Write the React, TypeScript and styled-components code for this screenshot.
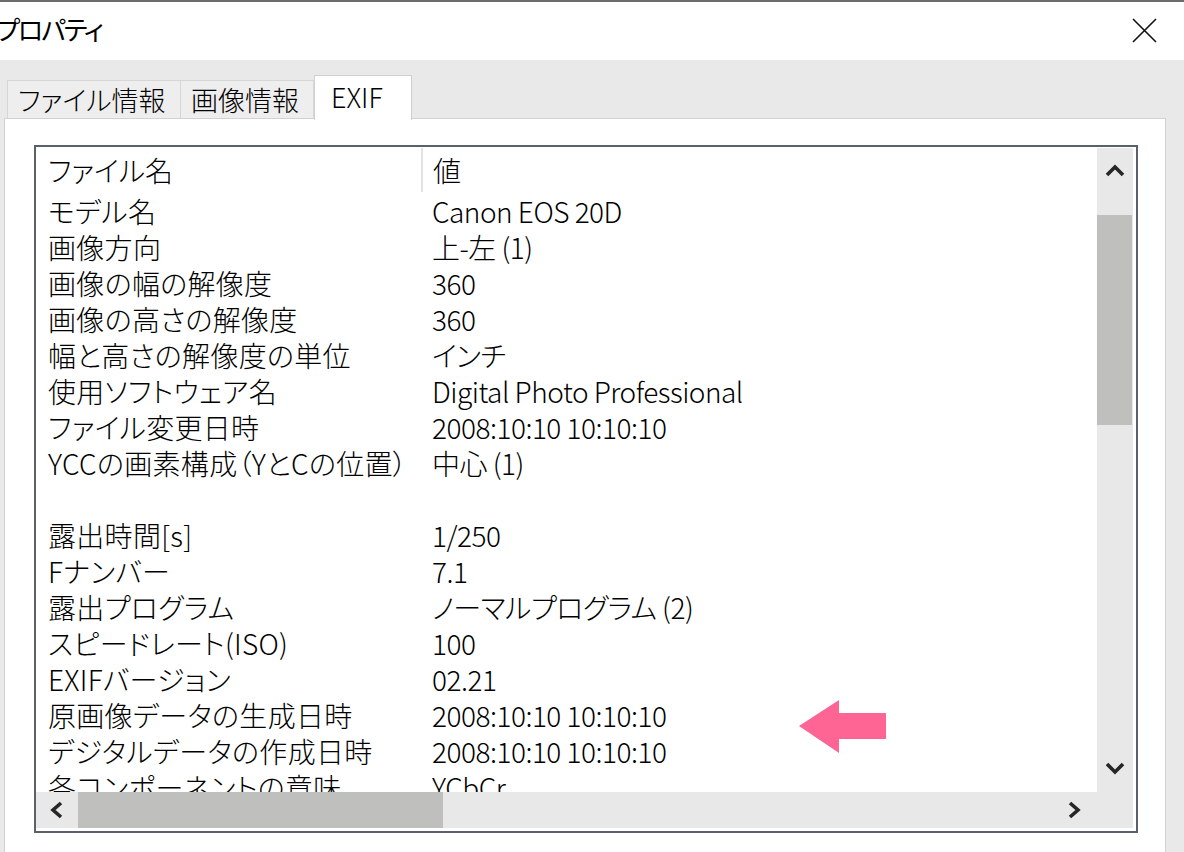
import React, { FC } from 'react';
import styled, { createGlobalStyle } from 'styled-components';

const GlobalStyle = createGlobalStyle`
  html, body {
    margin: 0;
    padding: 0;
    overflow: hidden;
    background: #ffffff;
  }
  * {
    box-sizing: border-box;
  }
`;

const Window = styled.div`
  width: 1184px;
  height: 852px;
  display: flex;
  flex-direction: column;
  background: #e9e9e9;
  border-top: 2px solid #6c6c6c;
  overflow: hidden;
  font-family: 'Noto Sans CJK JP', 'Noto Sans', sans-serif;
  font-weight: 300;
  color: #000;
`;

const TitleBar = styled.div`
  height: 58px;
  flex: none;
  display: flex;
  align-items: center;
  justify-content: space-between;
  background: #ffffff;
  padding-right: 27px;
`;

const Title = styled.span`
  font-size: 26px;
  font-weight: 400;
  letter-spacing: -2px;
  margin-left: -4px;
  margin-top: -6px;
  font-feature-settings: 'palt';
`;

const CloseButton = styled.svg`
  width: 25px;
  height: 25px;
  margin-top: -2px;
`;

const Body = styled.div`
  flex: 1;
  display: flex;
  flex-direction: column;
  padding: 15px 0 0 4px;
  min-height: 0;
`;

const TabStrip = styled.div`
  height: 43px;
  flex: none;
  display: flex;
  align-items: flex-end;
  padding-left: 3px;
`;

const Tab = styled.div<{ $w: number; $active?: boolean }>`
  width: ${(p) => p.$w}px;
  height: ${(p) => (p.$active ? 45 : 38)}px;
  margin-bottom: ${(p) => (p.$active ? -2 : 0)}px;
  position: relative;
  z-index: ${(p) => (p.$active ? 1 : 0)};
  background: ${(p) => (p.$active ? '#ffffff' : '#eeeeee')};
  border: 1px solid ${(p) => (p.$active ? '#d0d0d0' : '#d6d6d6')};
  border-bottom: none;
  margin-left: ${(p) => (p.$active ? 0 : -1)}px;
  display: flex;
  align-items: ${(p) => (p.$active ? 'flex-start' : 'center')};
  padding: ${(p) => (p.$active ? '5px 0 0 16px' : '0 0 0 10px')};
  font-size: 27px;
  line-height: 32px;
  font-feature-settings: 'palt';
  white-space: nowrap;
  &:first-child {
    margin-left: 0;
  }
`;

const Panel = styled.div`
  flex: 1;
  width: 1162px;
  background: #ffffff;
  border: 1px solid #d2d2d2;
  border-bottom: none;
  padding: 26px 0 0 29px;
`;

const ListView = styled.div`
  width: 1104px;
  height: 688px;
  border: 2px solid #59616a;
  padding: 1px 3px 3px 0;
  display: grid;
  grid-template-columns: 1fr 36px;
  grid-template-rows: 1fr 36px;
  background: #ffffff;
`;

const ListArea = styled.div`
  position: relative;
  overflow: hidden;
  font-size: 28px;
  font-feature-settings: 'palt';
`;

const HeaderRow = styled.div`
  height: 45px;
  display: grid;
  grid-template-columns: 385px 1fr;
`;

const HeaderCell = styled.div<{ $sep?: boolean }>`
  height: 44px;
  line-height: 44px;
  padding-left: ${(p) => (p.$sep ? 10 : 12)}px;
  border-left: ${(p) => (p.$sep ? '2px solid #e2e2e2' : 'none')};
  white-space: nowrap;
`;

const Row = styled.div`
  height: 36px;
  line-height: 36px;
  display: grid;
  grid-template-columns: 385px 1fr;
  white-space: nowrap;
`;

const NameCell = styled.div`
  padding-left: 12px;
  letter-spacing: 0.3px;
`;

const ValueCell = styled.div`
  padding-left: 11px;
  letter-spacing: -0.5px;
`;

const Pointer = styled.svg`
  position: absolute;
  left: 763px;
  top: 552px;
  width: 87px;
  height: 54px;
`;

const VScroll = styled.div`
  background: #e8e8e8;
  display: flex;
  flex-direction: column;
`;

const HScroll = styled.div`
  background: #e8e8e8;
  display: flex;
`;

const Corner = styled.div`
  background: #e8e8e8;
`;

const ArrowButton = styled.div<{ $size: number }>`
  flex: none;
  flex-basis: ${(p) => p.$size}px;
  display: flex;
  align-items: center;
  justify-content: center;
`;

const VThumb = styled.div`
  height: 210px;
  margin: 23px 1px 0 0;
  background: #bfc0be;
`;

const HThumb = styled.div`
  width: 365px;
  background: #bfc0be;
`;

const Spacer = styled.div`
  flex: 1;
`;

const Chevron: FC<{ dir: 'up' | 'down' | 'left' | 'right' }> = ({ dir }) => {
  const vertical = dir === 'up' || dir === 'down';
  const points = {
    up: '2,12 10,4 18,12',
    down: '2,3 10,11 18,3',
    left: '11,2 3,9 11,16',
    right: '3,2 11,9 3,16',
  }[dir];
  return (
    <svg
      width={vertical ? 20 : 14}
      height={vertical ? 15 : 18}
      viewBox={vertical ? '0 0 20 15' : '0 0 14 18'}
    >
      <polyline points={points} fill="none" stroke="#262626" strokeWidth="3.6" />
    </svg>
  );
};

const rows: [string, string][] = [
  ['モデル名', 'Canon EOS 20D'],
  ['画像方向', '上-左 (1)'],
  ['画像の幅の解像度', '360'],
  ['画像の高さの解像度', '360'],
  ['幅と高さの解像度の単位', 'インチ'],
  ['使用ソフトウェア名', 'Digital Photo Professional'],
  ['ファイル変更日時', '2008:10:10 10:10:10'],
  ['YCCの画素構成（YとCの位置）', '中心 (1)'],
  ['', ''],
  ['露出時間[s]', '1/250'],
  ['Fナンバー', '7.1'],
  ['露出プログラム', 'ノーマルプログラム (2)'],
  ['スピードレート(ISO)', '100'],
  ['EXIFバージョン', '02.21'],
  ['原画像データの生成日時', '2008:10:10 10:10:10'],
  ['デジタルデータの作成日時', '2008:10:10 10:10:10'],
  ['各コンポーネントの意味', 'YCbCr'],
];

const App: FC = () => (
  <>
    <GlobalStyle />
    <Window>
      <TitleBar>
        <Title>プロパティ</Title>
        <CloseButton viewBox="0 0 25 25">
          <path d="M1 1 L24 24 M24 1 L1 24" stroke="#111" strokeWidth="1.6" fill="none" />
        </CloseButton>
      </TitleBar>
      <Body>
        <TabStrip>
          <Tab $w={174}>ファイル情報</Tab>
          <Tab $w={134}>画像情報</Tab>
          <Tab $w={98} $active>
            EXIF
          </Tab>
        </TabStrip>
        <Panel>
          <ListView>
            <ListArea>
              <HeaderRow>
                <HeaderCell>ファイル名</HeaderCell>
                <HeaderCell $sep>値</HeaderCell>
              </HeaderRow>
              {rows.map(([name, value], i) => (
                <Row key={i}>
                  <NameCell>{name}</NameCell>
                  <ValueCell>{value}</ValueCell>
                </Row>
              ))}
              <Pointer viewBox="0 0 87 54">
                <path d="M0 26 L40 0 L40 13 L87 13 L87 39 L40 39 L40 53 Z" fill="#fe6494" />
              </Pointer>
            </ListArea>
            <VScroll>
              <ArrowButton $size={44}>
                <Chevron dir="up" />
              </ArrowButton>
              <VThumb />
              <Spacer />
              <ArrowButton $size={48}>
                <Chevron dir="down" />
              </ArrowButton>
            </VScroll>
            <HScroll>
              <ArrowButton $size={42}>
                <Chevron dir="left" />
              </ArrowButton>
              <HThumb />
              <Spacer />
              <ArrowButton $size={46}>
                <Chevron dir="right" />
              </ArrowButton>
            </HScroll>
            <Corner />
          </ListView>
        </Panel>
      </Body>
    </Window>
  </>
);

export default App;
